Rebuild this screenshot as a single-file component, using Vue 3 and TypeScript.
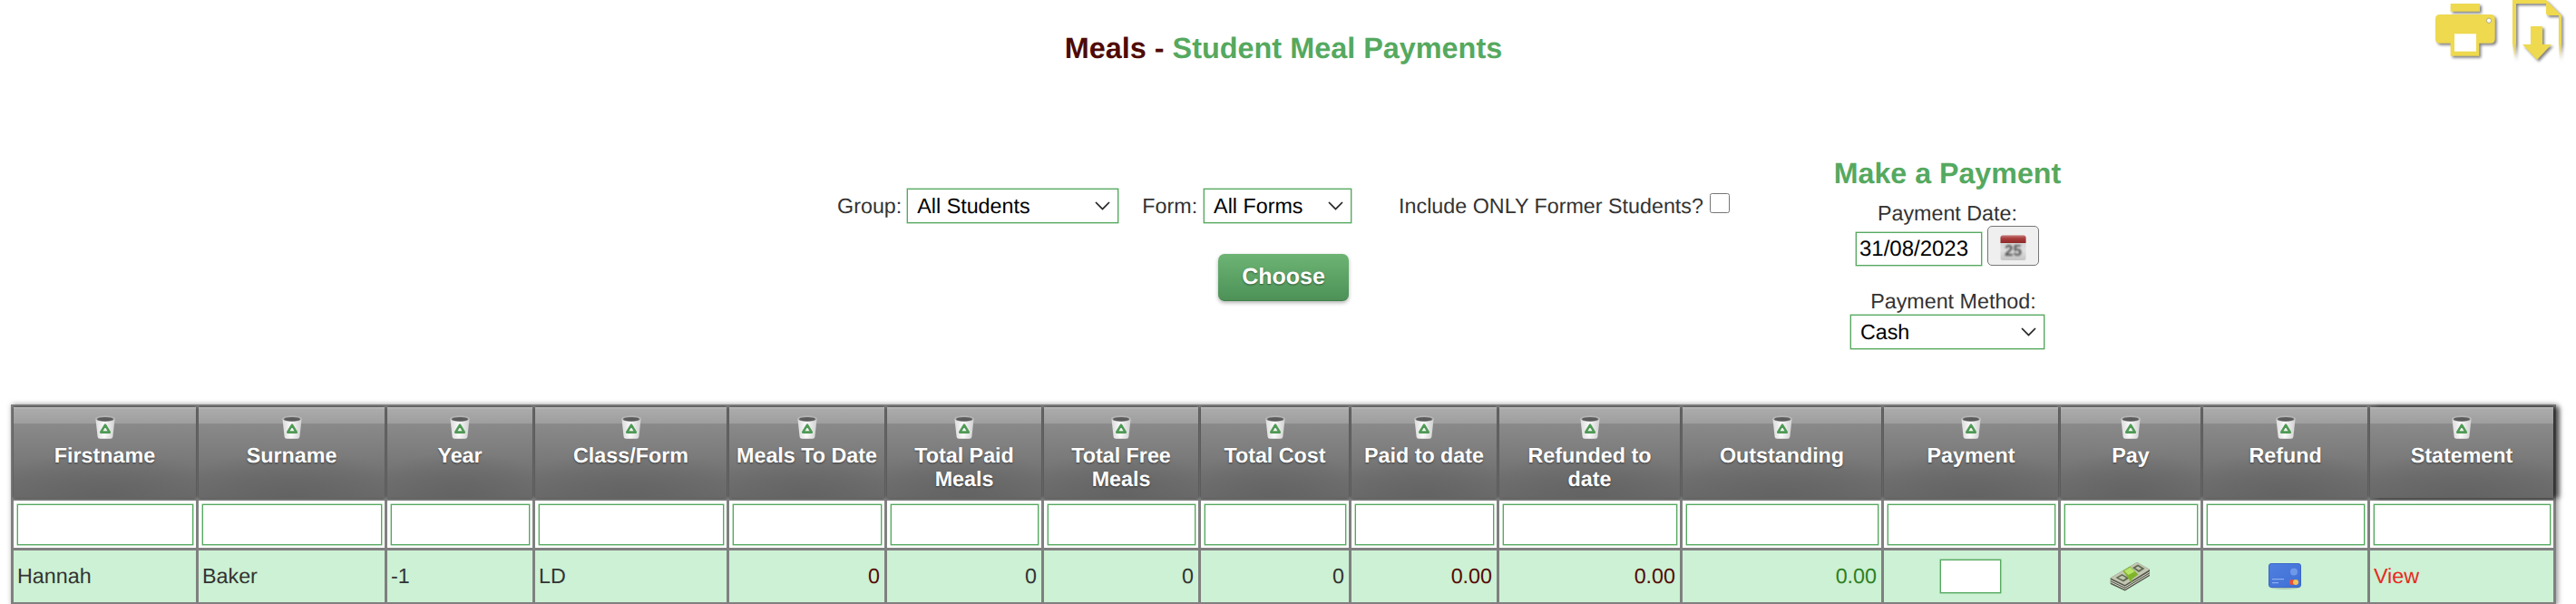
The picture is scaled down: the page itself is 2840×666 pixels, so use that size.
<script setup lang="ts">
interface Column {
  label: string
  width: number
}

interface Cell {
  text: string
  kind: string
}

const columns: Column[] = [
  { label: 'Firstname', width: 201 },
  { label: 'Surname', width: 205 },
  { label: 'Year', width: 160 },
  { label: 'Class/Form', width: 211 },
  { label: 'Meals To Date', width: 171 },
  { label: 'Total Paid Meals', width: 170 },
  { label: 'Total Free Meals', width: 170 },
  { label: 'Total Cost', width: 163 },
  { label: 'Paid to date', width: 160 },
  { label: 'Refunded to date', width: 199 },
  { label: 'Outstanding', width: 219 },
  { label: 'Payment', width: 192 },
  { label: 'Pay', width: 154 },
  { label: 'Refund', width: 181 },
  { label: 'Statement', width: 202 },
]

const leading: Cell[] = [
  { text: 'Hannah', kind: 'left' },
  { text: 'Baker', kind: 'left' },
  { text: '-1', kind: 'left' },
  { text: 'LD', kind: 'left' },
  { text: '0', kind: 'right maroon' },
  { text: '0', kind: 'right' },
  { text: '0', kind: 'right' },
  { text: '0', kind: 'right' },
  { text: '0.00', kind: 'right maroon' },
  { text: '0.00', kind: 'right maroon' },
  { text: '0.00', kind: 'right green' },
]
</script>

<template>
  <div class="page">
    <svg class="defs" width="0" height="0" aria-hidden="true">
      <defs>
        <linearGradient id="binBody" x1="0" y1="0" x2="1" y2="0">
          <stop offset="0" stop-color="#dcdcdc" />
          <stop offset="0.45" stop-color="#fafafa" />
          <stop offset="1" stop-color="#d0d0d0" />
        </linearGradient>
        <linearGradient id="docFade" gradientUnits="userSpaceOnUse" x1="0" y1="0" x2="0" y2="66">
          <stop offset="0" stop-color="#eed94f" />
          <stop offset="0.72" stop-color="#eed94f" />
          <stop offset="1" stop-color="#eed94f" stop-opacity="0" />
        </linearGradient>
        <linearGradient id="calTop" x1="0" y1="0" x2="0" y2="1">
          <stop offset="0" stop-color="#c87a7a" />
          <stop offset="0.4" stop-color="#a83c3c" />
          <stop offset="1" stop-color="#8f2a2a" />
        </linearGradient>
        <linearGradient id="calBody" x1="0" y1="0" x2="0" y2="1">
          <stop offset="0" stop-color="#c9c9c9" />
          <stop offset="0.6" stop-color="#e0e0e0" />
          <stop offset="1" stop-color="#c4c4c4" />
        </linearGradient>
        <linearGradient id="cardFace" x1="0" y1="0" x2="1" y2="1">
          <stop offset="0" stop-color="#4f7fe0" />
          <stop offset="1" stop-color="#3f6fd4" />
        </linearGradient>
        <filter id="soft" x="-10%" y="-10%" width="120%" height="120%">
          <feGaussianBlur stdDeviation="0.45" />
        </filter>
        <filter id="softer" x="-10%" y="-10%" width="120%" height="120%">
          <feGaussianBlur stdDeviation="0.8" />
        </filter>
        <symbol id="bin" viewBox="0 0 22 26">
          <path d="M0.4 3.5 L2.6 23.6 Q2.9 25.8 5.2 25.8 H16.8 Q19.1 25.8 19.4 23.6 L21.6 3.5 Z" fill="url(#binBody)" />
          <ellipse cx="11" cy="3.6" rx="10.9" ry="3.3" fill="#b4b4b4" />
          <ellipse cx="11" cy="4.2" rx="9" ry="2.3" fill="#5c5c5c" />
          <path d="M11 10.6 L15.8 18.6 H6.2 Z" fill="#f4f4f4" stroke="#4f9a55" stroke-width="2.6" stroke-linejoin="round" filter="url(#soft)" />
        </symbol>
      </defs>
    </svg>

    <div class="tools">
      <svg class="tool printer" width="66" height="58" viewBox="0 0 66 58">
        <rect x="16.7" y="0" width="32.3" height="8.7" fill="#eed94f" />
        <path d="M5 12 H60.7 Q65.7 12 65.7 17 V38.7 Q65.7 43.7 60.7 43.7 H48.3 V57.7 H16.7 V43.7 H5 Q0 43.7 0 38.7 V17 Q0 12 5 12 Z" fill="#eed94f" />
        <rect x="21" y="33.3" width="24" height="19.4" fill="#fff" />
        <circle cx="59" cy="18.7" r="2.6" fill="#fff" stroke="#9a9a7a" stroke-width="0.8" />
      </svg>
      <svg class="tool doc" width="54" height="66" viewBox="0 0 54 66">
        <path d="M0 0 H37 V4 H4 V48 L3.4 66 H2 L0 48 Z" fill="url(#docFade)" />
        <path d="M37 0 L54 17 H38.5 L37 15 Z" fill="#eed94f" />
        <path d="M51 17 H54 V48 L52.6 66 H51.6 L51 48 Z" fill="url(#docFade)" />
        <path d="M20 29 H33 V49 H43 L27 66 L11 49 H20 Z" fill="#eed94f" />
      </svg>
    </div>

    <h1 class="title"><span class="maroon-title">Meals - </span><span class="green-title">Student Meal Payments</span></h1>

    <section class="controls">
      <div class="filters">
        <div class="filter-row">
          <label class="label group-label">Group:</label>
          <select class="field group-select">
            <option>All Students</option>
          </select>
          <label class="label form-label">Form:</label>
          <select class="field form-select">
            <option>All Forms</option>
          </select>
          <label class="label former-label">Include ONLY Former Students?</label>
          <input class="former" type="checkbox" />
        </div>
        <button class="choose" type="button">Choose</button>
      </div>

      <div class="panel">
        <h2 class="panel-title">Make a Payment</h2>
        <div class="label date-label">Payment Date:</div>
        <div class="date-row">
          <input class="field date-input" type="text" value="31/08/2023" />
          <button class="cal-btn" type="button" aria-label="Calendar">
            <svg width="29" height="28" viewBox="0 0 29 28">
              <g filter="url(#soft)">
                <rect x="0.5" y="0.5" width="28" height="27.5" rx="2.5" fill="url(#calBody)" />
                <path d="M0.5 9 V3 Q0.5 0.5 3 0.5 H26 Q28.5 0.5 28.5 3 V9 Z" fill="url(#calTop)" />
              </g>
              <text class="cal-text" x="14.5" y="23" text-anchor="middle" filter="url(#softer)">25</text>
            </svg>
          </button>
        </div>
        <div class="label method-label">Payment Method:</div>
        <select class="field method-select">
          <option>Cash</option>
        </select>
      </div>
    </section>

    <table class="grid">
      <colgroup>
        <col v-for="c in columns" :key="c.label" :style="{ width: c.width + 'px' }" />
      </colgroup>
      <thead>
        <tr class="head-row">
          <th v-for="c in columns" :key="c.label">
            <svg class="bin" width="22" height="26"><use href="#bin" /></svg>
            <div class="head-label">{{ c.label }}</div>
          </th>
        </tr>
        <tr class="filter-cells">
          <td v-for="c in columns" :key="c.label"><input class="field cell-input" type="text" /></td>
        </tr>
      </thead>
      <tbody>
        <tr class="data-row">
          <td v-for="(cell, i) in leading" :key="i" :class="cell.kind">{{ cell.text }}</td>
          <td class="center"><input class="field pay-input" type="text" /></td>
          <td class="center">
            <svg class="row-icon" width="45" height="32" viewBox="0 0 45 32">
              <g filter="url(#soft)">
                <path d="M0.7 17.3 L30 0 L44 8 V15 L16.7 31.5 L0.7 24 Z" fill="#55594c" />
                <path d="M0.7 19.6 L16.7 27.2 L44 10.6 M0.7 21.8 L16.7 29.4 L44 12.9" fill="none" stroke="#dcdcd0" stroke-width="1" />
                <path d="M0.7 17.3 L30 0 L44 8 L16.7 25 Z" fill="#c3c6b2" />
                <path d="M6.5 17 L13.5 13 L21.5 17.4 L15 21.4 Z" fill="#5f6a52" />
                <path d="M9.5 17 L13.5 14.8 L18 17.3 L14.8 19.4 Z" fill="#c3c6b2" />
                <path d="M25 6 L31 2.6 L38.5 7 L32 11 Z" fill="#5f6a52" />
                <path d="M28.2 6.2 L31 4.6 L35 7 L32 8.8 Z" fill="#c3c6b2" />
                <path d="M14.5 9.5 L22.5 4.6 L31.5 13.5 L24.5 18.4 V23 L22.4 20.5 Z" fill="#7fb52c" />
                <path d="M16 9.4 L22.6 5.4 L27.5 10.2 L20.4 14 Z" fill="#b8e468" />
              </g>
            </svg>
          </td>
          <td class="center">
            <svg class="row-icon" width="36" height="30" viewBox="0 0 36 30">
              <ellipse cx="18" cy="26.5" rx="16" ry="2.5" fill="#8a9a8c" opacity="0.45" filter="url(#soft)" />
              <g filter="url(#soft)">
                <rect x="0.5" y="0.5" width="35" height="26" rx="2.5" fill="url(#cardFace)" stroke="#3a66c8" />
                <circle cx="28" cy="9.5" r="4" fill="#6f98ea" />
                <rect x="4" y="17" width="13" height="1.2" fill="#8fb0ee" />
                <rect x="4" y="21" width="7" height="1.2" fill="#8fb0ee" />
                <circle cx="26" cy="21" r="3" fill="#e8503a" />
                <circle cx="30" cy="21" r="3" fill="#f2c25a" />
              </g>
            </svg>
          </td>
          <td class="left view">View</td>
        </tr>
      </tbody>
    </table>
  </div>
</template>

<style scoped>
.page {
  position: relative;
  box-sizing: border-box;
  width: 2840px;
  height: 666px;
  padding-left: 12px;
  overflow: hidden;
  font-family: "Liberation Sans", Arial, sans-serif;
  font-size: 23.3px;
  color: #333;
  background: #fff;
  text-rendering: geometricPrecision;
}

.defs {
  position: absolute;
}

.tools {
  position: absolute;
  top: 0;
  left: 2685px;
  display: flex;
  gap: 19px;
  align-items: flex-start;
}

.tool {
  display: block;
  filter: drop-shadow(2px 2px 1.5px rgba(0, 0, 0, 0.5));
}

.printer {
  margin-top: 4px;
}

.title {
  box-sizing: border-box;
  width: 2806px;
  margin: 0;
  padding-top: 35px;
  font-size: 32.4px;
  line-height: 37px;
  font-weight: bold;
  text-align: center;
}

.maroon-title {
  color: #4f0a05;
}

.green-title {
  color: #55a95f;
}

.controls {
  width: 2806px;
  margin-top: 101px;
  display: grid;
  grid-template-columns: 1fr auto 1fr;
  align-items: start;
}

.filters {
  grid-column: 2;
  padding-top: 35px;
  display: flex;
  flex-direction: column;
  align-items: center;
}

.filter-row {
  display: flex;
  align-items: center;
  height: 38px;
}

.label {
  line-height: 26px;
  white-space: nowrap;
}

.field {
  box-sizing: border-box;
  border: 1px solid #55a95f;
  box-shadow: 0 0 0 0.5px rgba(85, 169, 95, 0.75);
  border-radius: 0;
  background-color: #fff;
  color: #000;
  font-family: inherit;
  font-size: 23.3px;
  text-rendering: geometricPrecision;
  outline: none;
  margin: 0;
}

select.field {
  appearance: none;
  height: 38px;
  padding: 0 28px 0 10px;
  background-image: url("data:image/svg+xml,%3Csvg xmlns='http://www.w3.org/2000/svg' width='17' height='10' viewBox='0 0 17 10'%3E%3Cpath d='M1 1 L8.5 8.5 L16 1' fill='none' stroke='%23222' stroke-width='1.7'/%3E%3C/svg%3E");
  background-repeat: no-repeat;
  background-position: right 8px center;
}

.group-select {
  width: 233px;
  margin-left: 6px;
}

.form-label {
  margin-left: 26px;
}

.form-select {
  width: 163px;
  margin-left: 7px;
}

.former-label {
  margin-left: 52px;
}

.former {
  width: 22px;
  height: 22px;
  margin: -6px 0 0 7px;
}

.choose {
  width: 144px;
  height: 52px;
  margin-top: 34px;
  border: none;
  border-bottom: 1.5px solid #3f7d48;
  border-radius: 7px;
  background: linear-gradient(#6cb474, #4d9157);
  color: #fff;
  font-family: inherit;
  font-size: 25px;
  font-weight: bold;
  text-rendering: geometricPrecision;
  text-shadow: 0 1px 2px rgba(0, 0, 0, 0.45);
  box-shadow: 0 2px 4px rgba(0, 0, 0, 0.3);
  padding: 0;
}

.panel {
  grid-column: 3;
  justify-self: start;
  margin-left: 110px;
  width: 260px;
  display: flex;
  flex-direction: column;
  align-items: center;
}

.panel-title {
  margin: 0;
  font-size: 32.2px;
  line-height: 37px;
  font-weight: bold;
  color: #55a95f;
  white-space: nowrap;
}

.date-label {
  margin-top: 12px;
}

.date-row {
  display: flex;
  align-items: flex-end;
  gap: 6px;
  margin-top: 1px;
}

.date-input {
  width: 139px;
  height: 37px;
  padding: 0 0 0 3px;
  font-size: 24px;
}

.cal-btn {
  box-sizing: border-box;
  width: 57px;
  height: 44px;
  padding: 4px 0 0 13px;
  display: block;
  border: 1.5px solid #767676;
  border-radius: 5px;
  background: #efefef;
  text-align: left;
  line-height: 0;
}

.cal-text {
  font-size: 17px;
  font-weight: bold;
  fill: #4d4d4d;
}

.method-label {
  margin-top: 26px;
  padding-left: 13px;
}

.method-select {
  width: 214px;
  margin-top: 2px;
}

.grid {
  margin-top: 61px;
  width: 2806px;
  table-layout: fixed;
  border-collapse: separate;
  border-spacing: 3px;
  background: #808080;
  box-shadow: 0 0 6px rgba(0, 0, 0, 0.2), 3px 0 5px rgba(0, 0, 0, 0.25);
}

.head-row th {
  box-sizing: border-box;
  height: 100px;
  padding: 9px 8px 0;
  vertical-align: top;
  font-weight: bold;
  color: #fff;
  background:
    linear-gradient(#c0c0c0, #ababab 2px, #9e9e9e 18px, transparent 18px),
    radial-gradient(ellipse 70% 50% at 50% 100%, #636363 0, rgba(99, 99, 99, 0) 100%),
    linear-gradient(#8a8a8a 18px, #717171 78%, #6c6c6c);
  box-shadow: 0 0 3px rgba(0, 0, 0, 0.65);
}

.head-row th:last-child {
  box-shadow: 0 0 3px rgba(0, 0, 0, 0.65), 7px 0 5px rgba(0, 0, 0, 0.5);
}

.bin {
  display: block;
  margin: 0 auto 5px;
}

.head-label {
  line-height: 26px;
  text-shadow: 0 1px 2px rgba(0, 0, 0, 0.5);
}

.filter-cells td {
  box-sizing: border-box;
  height: 52px;
  padding: 4px 3px 3px 4px;
  background: #fff;
}

.cell-input {
  display: block;
  width: 100%;
  height: 45px;
  padding: 0;
}

.data-row td {
  box-sizing: border-box;
  height: 57px;
  background: #ccf1d4;
  padding: 0 5px 0 4px;
  vertical-align: middle;
}

.left {
  text-align: left;
}

.right {
  text-align: right;
}

.center {
  text-align: center;
}

.maroon {
  color: #560a05;
}

.green {
  color: #2f7f1f;
}

.view {
  color: #e8281e;
}

.pay-input {
  display: block;
  width: 67px;
  height: 37px;
  margin: 0 auto;
}

.row-icon {
  display: block;
  margin: 0 auto;
}
</style>

<style>
html,
body {
  margin: 0;
  overflow: hidden;
  background: #fff;
}
</style>
